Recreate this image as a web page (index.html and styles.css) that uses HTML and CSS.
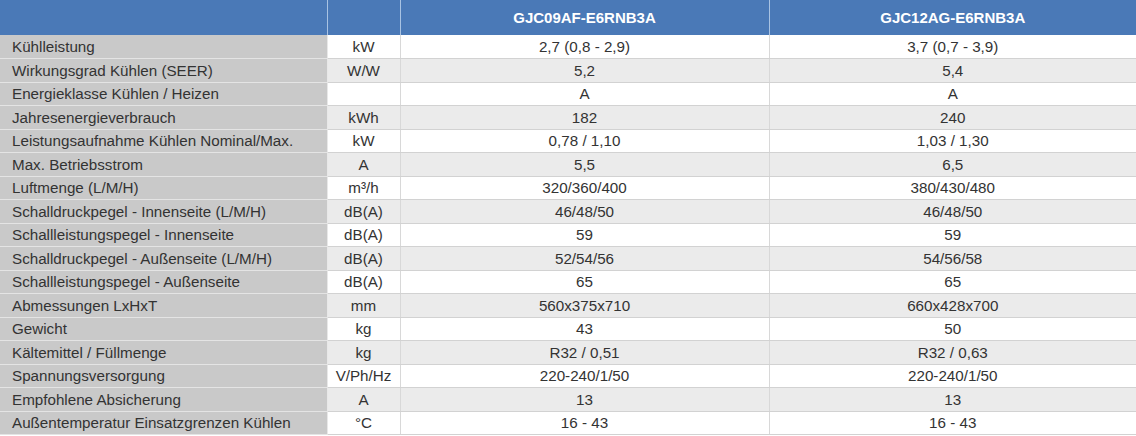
FILE: index.html
```html
<!DOCTYPE html>
<html lang="de">
<head>
<meta charset="utf-8">
<title>Technische Daten</title>
<link rel="stylesheet" href="styles.css">
</head>
<body>
<table class="specs">
  <colgroup>
    <col class="c-label">
    <col class="c-unit">
    <col class="c-val">
    <col class="c-val2">
  </colgroup>
  <thead>
    <tr>
      <th class="label"></th>
      <th class="unit"></th>
      <th>GJC09AF-E6RNB3A</th>
      <th>GJC12AG-E6RNB3A</th>
    </tr>
  </thead>
  <tbody>
    <tr><td class="label">Kühlleistung</td><td class="unit">kW</td><td>2,7 (0,8 - 2,9)</td><td>3,7 (0,7 - 3,9)</td></tr>
    <tr><td class="label">Wirkungsgrad Kühlen (SEER)</td><td class="unit">W/W</td><td>5,2</td><td>5,4</td></tr>
    <tr><td class="label">Energieklasse Kühlen / Heizen</td><td class="unit"></td><td>A</td><td>A</td></tr>
    <tr><td class="label">Jahresenergieverbrauch</td><td class="unit">kWh</td><td>182</td><td>240</td></tr>
    <tr><td class="label">Leistungsaufnahme Kühlen Nominal/Max.</td><td class="unit">kW</td><td>0,78 / 1,10</td><td>1,03 / 1,30</td></tr>
    <tr><td class="label">Max. Betriebsstrom</td><td class="unit">A</td><td>5,5</td><td>6,5</td></tr>
    <tr><td class="label">Luftmenge (L/M/H)</td><td class="unit">m³/h</td><td>320/360/400</td><td>380/430/480</td></tr>
    <tr><td class="label">Schalldruckpegel - Innenseite (L/M/H)</td><td class="unit">dB(A)</td><td>46/48/50</td><td>46/48/50</td></tr>
    <tr><td class="label">Schallleistungspegel - Innenseite</td><td class="unit">dB(A)</td><td>59</td><td>59</td></tr>
    <tr><td class="label">Schalldruckpegel - Außenseite (L/M/H)</td><td class="unit">dB(A)</td><td>52/54/56</td><td>54/56/58</td></tr>
    <tr><td class="label">Schallleistungspegel - Außenseite</td><td class="unit">dB(A)</td><td>65</td><td>65</td></tr>
    <tr><td class="label">Abmessungen LxHxT</td><td class="unit">mm</td><td>560x375x710</td><td>660x428x700</td></tr>
    <tr><td class="label">Gewicht</td><td class="unit">kg</td><td>43</td><td>50</td></tr>
    <tr><td class="label">Kältemittel / Füllmenge</td><td class="unit">kg</td><td>R32 / 0,51</td><td>R32 / 0,63</td></tr>
    <tr><td class="label">Spannungsversorgung</td><td class="unit">V/Ph/Hz</td><td>220-240/1/50</td><td>220-240/1/50</td></tr>
    <tr><td class="label">Empfohlene Absicherung</td><td class="unit">A</td><td>13</td><td>13</td></tr>
    <tr><td class="label">Außentemperatur Einsatzgrenzen Kühlen</td><td class="unit">°C</td><td>16 - 43</td><td>16 - 43</td></tr>
  </tbody>
</table>
</body>
</html>
```
FILE: styles.css
```css
html, body {
  margin: 0;
  padding: 0;
  background: #ffffff;
}

.specs {
  width: 1136px;
  border-collapse: collapse;
  table-layout: fixed;
  font-family: "Liberation Sans", Arial, sans-serif;
  font-size: 15.2px;
  color: #333333;
}

.c-label { width: 327px; }
.c-unit { width: 73px; }
.c-val { width: 369px; }
.c-val2 { width: 367px; }

.specs th {
  height: 35px;
  padding: 0;
  background: #4a79b7;
  color: #ffffff;
  font-weight: bold;
  font-size: 15px;
  text-align: center;
  border-left: 1px solid #a9c3e3;
  box-sizing: border-box;
}

.specs th.label {
  border-left: none;
}

.specs tbody tr {
  height: 23.5px;
}

.specs td {
  padding: 0;
  text-align: center;
  white-space: nowrap;
  border-bottom: 1px solid #d2d2d2;
  border-left: 1px solid #d8d8d8;
  background: #ffffff;
  line-height: 17px;
}

.specs tbody tr:nth-child(even) td {
  background: #ebebeb;
}

.specs td.label {
  text-align: left;
  padding-left: 12px;
  background: #c9c9c9;
  border-left: none;
  border-bottom-color: #e4e4e4;
}

.specs tbody tr:nth-child(even) td.label {
  background: #c9c9c9;
}

.specs td.unit {
  border-left-color: #e8e8e8;
}
```
